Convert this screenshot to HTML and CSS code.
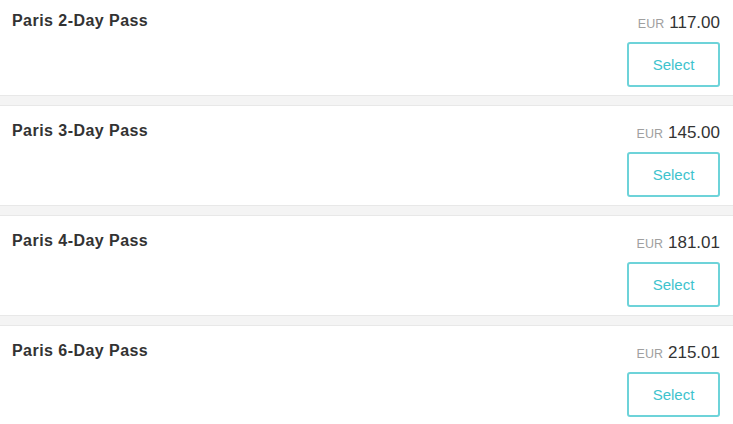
FILE: index.html
```html
<!DOCTYPE html>
<html>
<head>
<meta charset="utf-8">
<link rel="stylesheet" href="styles.css">
</head>
<body>
<div class="list">
  <div class="card">
    <div class="title">Paris 2-Day Pass</div>
    <div class="side">
      <div class="price"><span class="cur">EUR</span><span class="amt">117.00</span></div>
      <button class="select">Select</button>
    </div>
  </div>
  <div class="card">
    <div class="title">Paris 3-Day Pass</div>
    <div class="side">
      <div class="price"><span class="cur">EUR</span><span class="amt">145.00</span></div>
      <button class="select">Select</button>
    </div>
  </div>
  <div class="card">
    <div class="title">Paris 4-Day Pass</div>
    <div class="side">
      <div class="price"><span class="cur">EUR</span><span class="amt">181.01</span></div>
      <button class="select">Select</button>
    </div>
  </div>
  <div class="card">
    <div class="title">Paris 6-Day Pass</div>
    <div class="side">
      <div class="price"><span class="cur">EUR</span><span class="amt">215.01</span></div>
      <button class="select">Select</button>
    </div>
  </div>
</div>
</body>
</html>
```
FILE: styles.css
```css
html, body {
  margin: 0;
  padding: 0;
  background: #f4f4f4;
  font-family: "Liberation Sans", Arial, sans-serif;
  overflow: hidden;
}
.list {
  margin-top: -5px;
  display: flex;
  flex-direction: column;
  gap: 9px;
}
.card {
  background: #fff;
  border-top: 1px solid #e8e8e8;
  border-bottom: 1px solid #e8e8e8;
  padding: 14px 13px 8px 12px;
  display: flex;
  justify-content: space-between;
  align-items: flex-start;
}
.title {
  font-size: 16px;
  line-height: 20px;
  padding-top: 1px;
  font-weight: bold;
  color: #333;
  letter-spacing: 0.45px;
}
.side {
  margin-top: 3px;
  display: flex;
  flex-direction: column;
  align-items: flex-end;
  gap: 9px;
}
.price {
  height: 20px;
  display: flex;
  align-items: baseline;
  gap: 5px;
  white-space: nowrap;
}
.cur {
  font-size: 12.5px;
  line-height: 20px;
  color: #a0a0a0;
}
.amt {
  font-size: 17px;
  line-height: 20px;
  color: #333;
}
.select {
  width: 93px;
  height: 45px;
  box-sizing: border-box;
  border: 2px solid #6dd3d9;
  border-radius: 3px;
  background: #fff;
  color: #3ec3cd;
  font-family: "Liberation Sans", Arial, sans-serif;
  font-size: 15px;
  padding: 0;
}
```
